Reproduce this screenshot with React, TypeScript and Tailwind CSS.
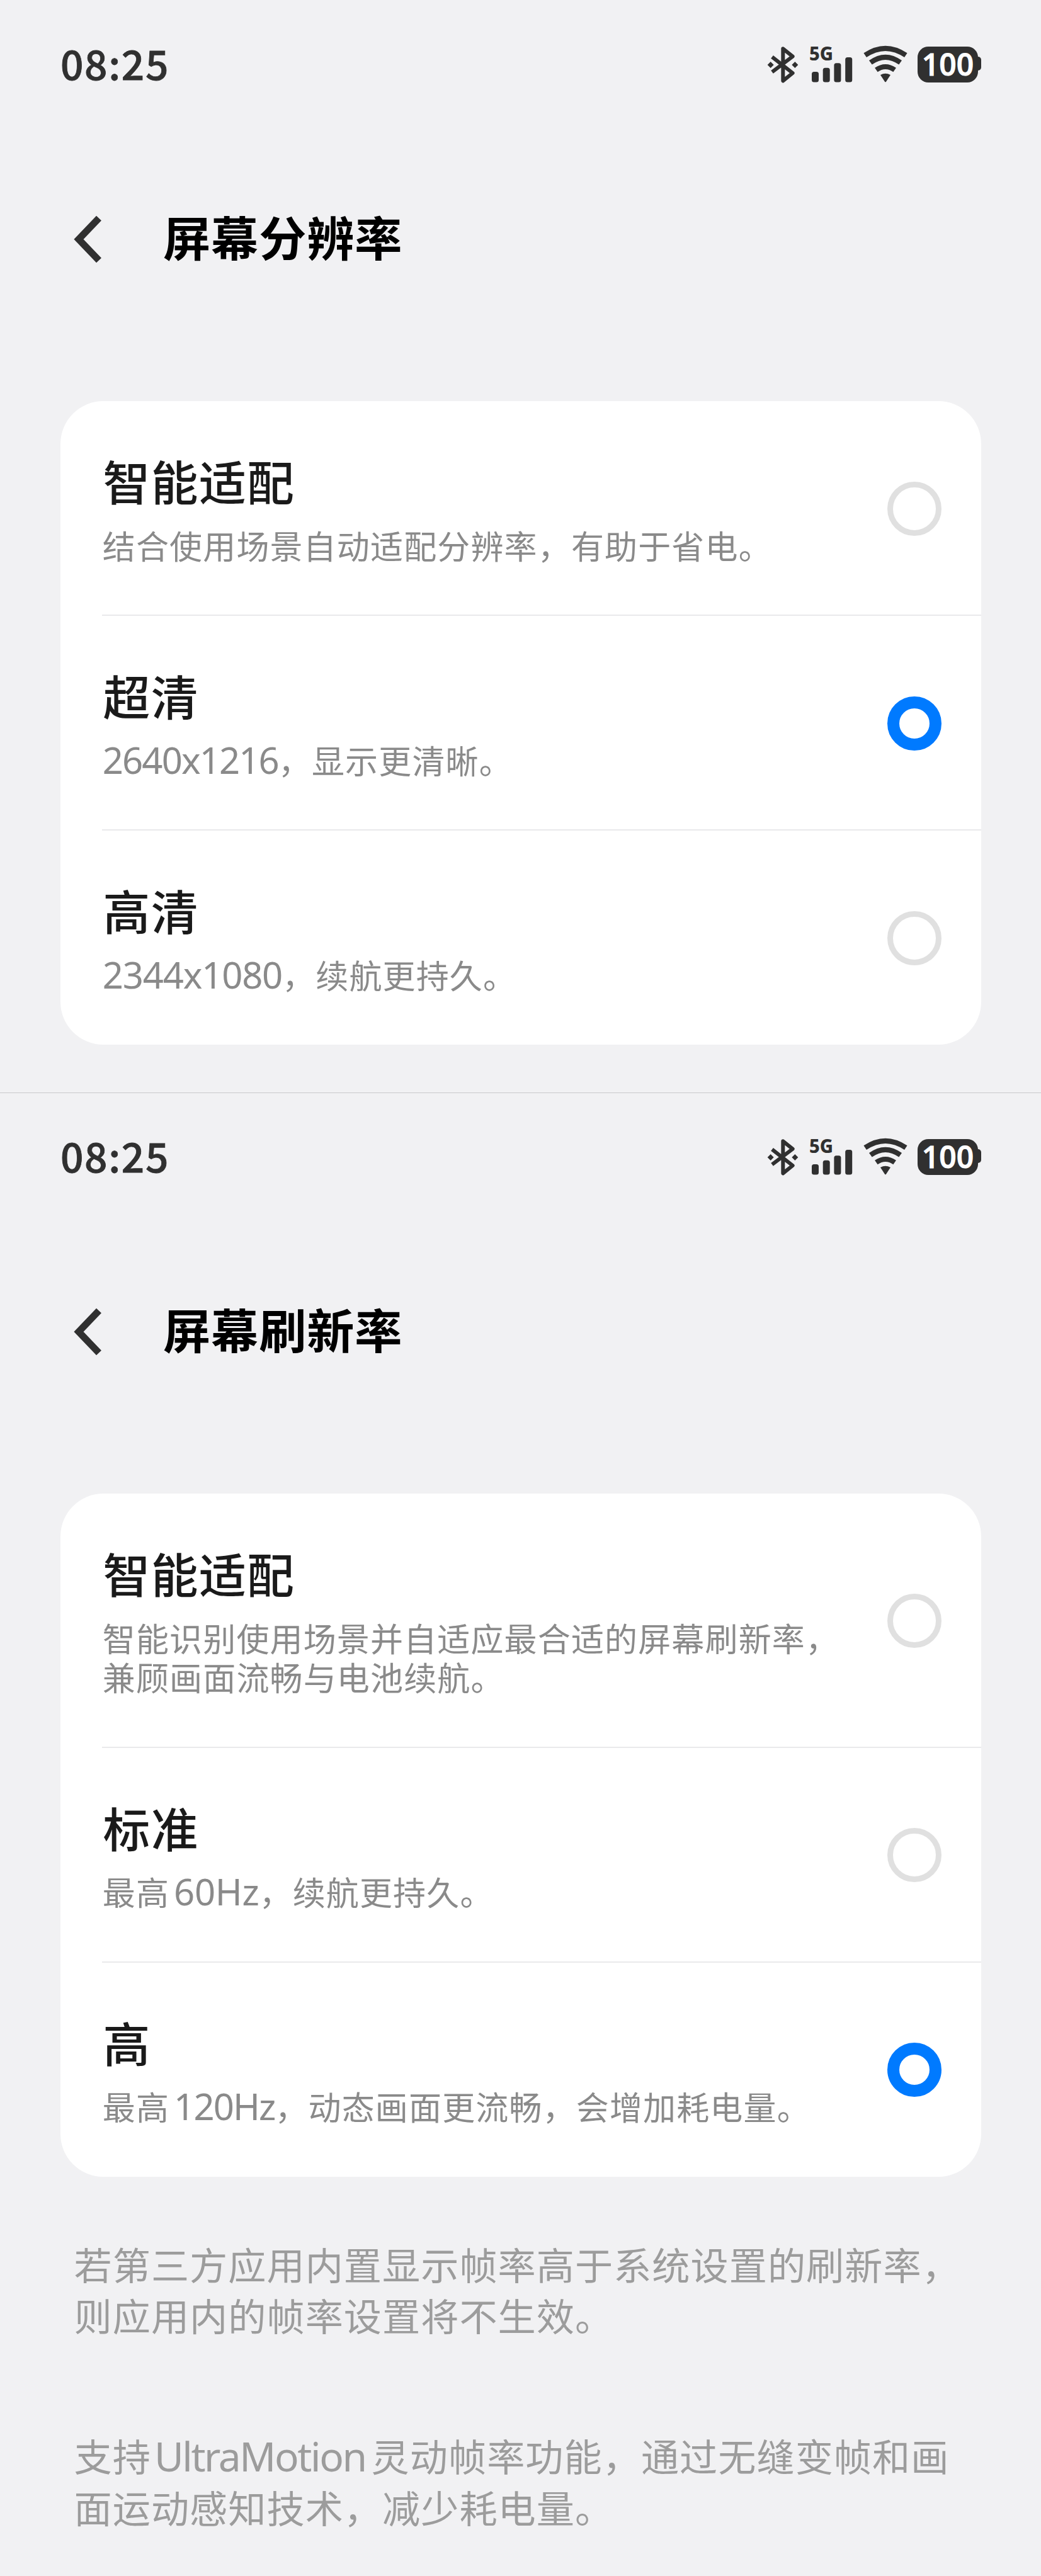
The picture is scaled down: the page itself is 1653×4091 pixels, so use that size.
import React, { useState } from 'react';

interface Option {
  id: string;
  title: string;
  desc: React.ReactNode;
}

// Latin runs sit a little larger than the Chinese text around them
const Latin = ({ children, className = '' }: { children: React.ReactNode; className?: string }) => (
  <span className={`font-['Noto_Sans','Noto_Sans_CJK_SC',sans-serif] leading-[0] ${className}`}>{children}</span>
);

const resolutionOptions: Option[] = [
  { id: 'auto', title: '智能适配', desc: '结合使用场景自动适配分辨率，有助于省电。' },
  {
    id: 'uhd',
    title: '超清',
    desc: <><Latin className="text-[58px] tracking-[-1.9px]">2640x1216</Latin>，显示更清晰。</>,
  },
  {
    id: 'hd',
    title: '高清',
    desc: <><Latin className="text-[58px] tracking-[-1.2px]">2344x1080</Latin>，续航更持久。</>,
  },
];

const refreshOptions: Option[] = [
  {
    id: 'auto',
    title: '智能适配',
    desc: <>智能识别使用场景并自适应最合适的屏幕刷新率，<br />兼顾画面流畅与电池续航。</>,
  },
  {
    id: 'standard',
    title: '标准',
    desc: <>最高<Latin className="ml-[7px] text-[58px] tracking-[-0.3px]">60Hz</Latin>，续航更持久。</>,
  },
  {
    id: 'high',
    title: '高',
    desc: <>最高<Latin className="ml-[7px] text-[58px] tracking-[-1.9px]">120Hz</Latin>，动态画面更流畅，会增加耗电量。</>,
  },
];

const BluetoothIcon = () => (
  <svg className="h-[60px] w-[48px] overflow-visible" viewBox="0 0 144 180" fill="none" stroke="#303030" strokeWidth="18" strokeLinejoin="round">
    <path d="M21 55 119 132 73 169V16L119 53 21 127" />
    <path d="M14 78l15 15-15 15L-1 93zM130 78l15 15-15 15-15-15z" fill="#303030" stroke="none" />
  </svg>
);

const SignalIcon = () => (
  <svg className="ml-[18px] h-[60px] w-[70px] overflow-visible" viewBox="0 0 70 60" fill="#303030">
    <text x="0" y="24" fontSize="31" fontWeight="800" textLength="38" lengthAdjust="spacingAndGlyphs" className="font-['Noto_Sans',sans-serif]">5G</text>
    <rect x="4" y="42" width="11" height="16.5" rx="3.5" />
    <rect x="21.7" y="35.7" width="11" height="22.8" rx="3.5" />
    <rect x="39.4" y="28.3" width="11" height="30.2" rx="3.5" />
    <rect x="57.2" y="19" width="11" height="39.5" rx="3.5" />
  </svg>
);

const WifiIcon = () => (
  <svg className="ml-[16px] h-[60px] w-[70px] overflow-visible" viewBox="0 0 210 180" fill="none" stroke="#303030" strokeWidth="24">
    <path d="M8 47Q105-18 202 47" />
    <path d="M34 82Q105 31 176 82" />
    <path d="M61 117Q105 87 149 117" />
    <path d="M81 141Q105 127 129 141L108 173Q105 177 102 173Z" fill="#303030" stroke="none" />
  </svg>
);

const Battery = () => (
  <div className="ml-[16px] flex items-center">
    <div className="flex h-[57px] w-[96px] items-center justify-center rounded-[17px] bg-[#303030] font-['Open_Sans','Noto_Sans',sans-serif] text-[48px] leading-none font-semibold text-white [-webkit-text-stroke:0.9px_#fff]">
      100
    </div>
    <div className="-mt-[3px] h-[22px] w-[5px] rounded-r-[5px] bg-[#303030]" />
  </div>
);

const StatusBar = () => (
  <div className="flex h-[204px] items-center justify-between pr-[95px] pl-[96px]">
    <span className="pb-[6px] text-[64px] leading-none font-medium tracking-[1.6px] text-[#303030] [-webkit-text-stroke:0.8px_#303030]">08:25</span>
    <div className="flex items-center">
      <BluetoothIcon />
      <SignalIcon />
      <WifiIcon />
      <Battery />
    </div>
  </div>
);

const Radio = ({ checked }: { checked: boolean }) => (
  <span
    className={`mr-[63px] size-[86px] shrink-0 rounded-full ${
      checked ? 'border-[19.5px] border-[#007aff]' : 'border-[9.5px] border-[#e0e0e0]'
    }`}
  />
);

const OptionCard = ({ options, initial }: { options: Option[]; initial: string }) => {
  const [selected, setSelected] = useState(initial);

  return (
    <div className="mr-[95px] ml-[96px] rounded-[68px] bg-white pl-[66px]">
      {options.map(o => (
        <button
          key={o.id}
          onClick={() => setSelected(o.id)}
          className="flex w-full items-center justify-between border-b-[2px] border-[#e9e9eb] pt-[81px] pb-[79px] text-left last:border-transparent last:pb-[78px]"
        >
          <span className="block">
            <span className="ml-[1.5px] block text-[74.8px] leading-[90px] font-medium tracking-[1.4px] text-[#1a1a1a]">{o.title}</span>
            <span className="mt-[26.5px] ml-[0.8px] block text-[52px] leading-[62.6px] tracking-[1.15px] whitespace-nowrap text-[#8a8a8a]">{o.desc}</span>
          </span>
          <Radio checked={selected === o.id} />
        </button>
      ))}
    </div>
  );
};

const Header = ({ title }: { title: string }) => (
  <div className="flex h-[352px] items-center pl-[117px]">
    <svg className="h-[76px] w-[45px]" viewBox="0 0 45 76" fill="none" stroke="#303030" strokeWidth="11">
      <path d="M40 4.5 8 38 40 71.5" />
    </svg>
    <h1 className="ml-[97px] pb-[10px] text-[75.2px] leading-[90px] font-bold tracking-[0.9px] text-black">{title}</h1>
  </div>
);

export default function App() {
  return (
    <div className="h-[4091px] w-[1653px] overflow-hidden bg-[#f1f1f3] font-['Noto_Sans_CJK_SC',sans-serif]">
      <section className="h-[1736px] border-b border-[#c9c9cb]">
        <StatusBar />
        <Header title="屏幕分辨率" />
        <div className="h-[81px]" />
        <OptionCard options={resolutionOptions} initial="uhd" />
      </section>

      <section className="-mt-px">
        <StatusBar />
        <Header title="屏幕刷新率" />
        <div className="h-[81px]" />
        <OptionCard options={refreshOptions} initial="high" />
        <div className="mt-[97px] ml-[117.5px] text-[60.2px] leading-[81.6px] tracking-[1px] whitespace-nowrap text-[#9c9c9c]">
          <p>若第三方应用内置显示帧率高于系统设置的刷新率，<br />则应用内的帧率设置将不生效。</p>
          <p className="mt-[141px]">
            支持<Latin className="mr-[9px] ml-[5px] text-[64px] tracking-[-2.4px]">UltraMotion</Latin>灵动帧率功能，通过无缝变帧和画<br />面运动感知技术，减少耗电量。
          </p>
        </div>
      </section>
    </div>
  );
}
